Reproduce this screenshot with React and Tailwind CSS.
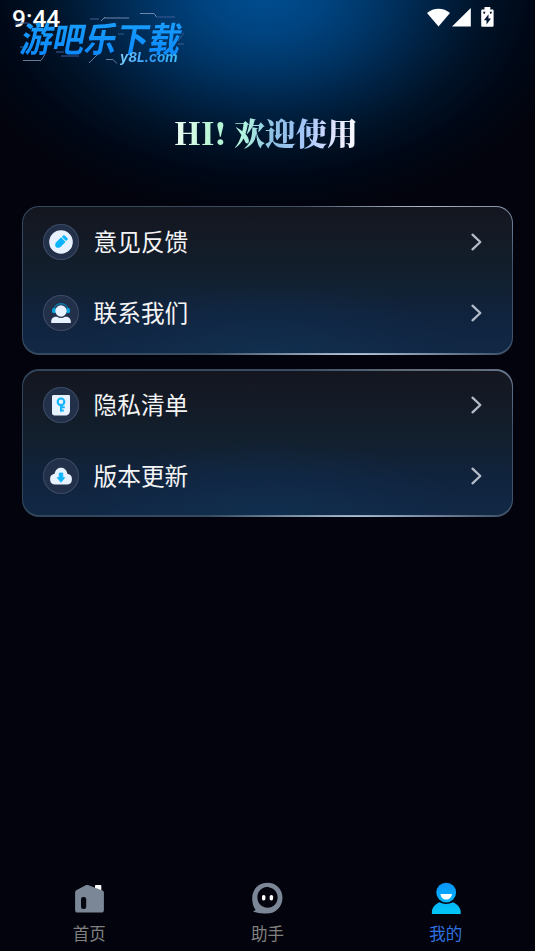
const CARDS = [
  {
    id: 'support',
    edge: 'bg-[radial-gradient(130px_6px_at_82%_0%,#b4bed0,transparent),radial-gradient(150px_6px_at_68%_100%,#c0d0e4,transparent),radial-gradient(60px_60px_at_100%_0%,#7d8da6,transparent),linear-gradient(90deg,#34495f,#3f536b)] pt-px pb-[2px]',
    items: [
      { label: '意见反馈', Icon: PencilIcon },
      { label: '联系我们', Icon: ServiceIcon },
    ],
  },
  {
    id: 'about',
    edge: 'bg-[radial-gradient(130px_6px_at_82%_0%,#68737f,transparent),radial-gradient(150px_6px_at_68%_100%,#b4c6dc,transparent),radial-gradient(60px_60px_at_100%_0%,#6d7c93,transparent),linear-gradient(90deg,#30445a,#3f536b)] pt-[2px] pb-[2px]',
    items: [
      { label: '隐私清单', Icon: KeyIcon },
      { label: '版本更新', Icon: CloudIcon },
    ],
  },
]

const TABS = [
  { label: '首页', Icon: HomeIcon },
  { label: '助手', Icon: AssistantIcon },
  { label: '我的', Icon: MineIcon, active: true },
]

function PencilIcon() {
  return (
    <svg className="block size-9" viewBox="0 0 36 36">
      <circle cx="18" cy="18" r="11.8" fill="#e8f1fe" />
      <g transform="rotate(45 18 18)" fill="#08b5fc">
        <path d="M15.400 15.300h5.200v6.900L19 24.400h-2l-1.600-2.200z" strokeLinejoin="round" stroke="#08b5fc" strokeWidth="1.200" />
        <rect x="14.900" y="10.800" width="6.200" height="3" rx="1.200" />
      </g>
    </svg>
  )
}

function ServiceIcon() {
  return (
    <svg className="block size-9" viewBox="0 0 36 36">
      <path d="M10.800 14.800a7.300 7.300 0 0 1 14.400 0" fill="none" stroke="#0b7fab" strokeWidth="1.400" />
      <rect x="9" y="13" width="4" height="5.200" rx="1.700" fill="#07a4df" />
      <rect x="23" y="13" width="4" height="5.200" rx="1.700" fill="#07a4df" />
      <circle cx="18" cy="16" r="5.700" fill="#e8f1fe" />
      <path d="M8.200 28v-1.500c0-2.800 2.100-4.800 5-4.800h.8c2.500 1.600 5.500 1.600 8 0h.8c2.900 0 5 2 5 4.800V28z" fill="#e8f1fe" />
    </svg>
  )
}

function KeyIcon() {
  return (
    <svg className="block size-9" viewBox="0 0 36 36">
      <path d="M10.500 8h15.200c.8 0 1.300.5 1.300 1.300v14.200c0 3-2 5-4.700 5H11.700A2.700 2.700 0 0 1 9 25.800V9.500C9 8.600 9.600 8 10.500 8z" fill="#e8f1fe" />
      <g fill="none" stroke="#15b6fb" strokeWidth="2.200">
        <circle cx="18" cy="14.800" r="3.300" />
        <path d="M18 18v6.800M18 20.200h3.800M18 23.600h2.800" strokeWidth="2" />
      </g>
    </svg>
  )
}

function CloudIcon() {
  return (
    <svg className="block size-9" viewBox="0 0 36 36">
      <path d="M12.200 26.600a5.500 5.500 0 0 1-.6-10.900c.8-4 3.500-5.900 6.400-5.900s5.600 1.900 6.400 5.900a5.500 5.500 0 0 1-.6 10.900z" fill="#e8f1fe" />
      <path d="M16.200 15h3.600v4.600h2L18 24.300l-3.800-4.700h2z" fill="#10b7ff" stroke="#10b7ff" strokeWidth=".8" strokeLinejoin="round" />
    </svg>
  )
}

function HomeIcon() {
  return (
    <svg className="block h-8 w-9" viewBox="0 0 36 32">
      <rect x="24" y="3" width="6.300" height="8" rx=".8" fill="#fff" />
      <path d="M5.700 8 14.200 3.400c1.200-.6 2.200-.6 3.500-.1l13.700 5.200c1 .4 1.500 1.100 1.500 2.200v17.200c0 1.700-.9 2.600-2.600 2.600H6.700c-1.700 0-2.600-.9-2.600-2.600V10.800c0-1.400.5-2.200 1.600-2.800z" fill="#7b8796" />
      <rect x="10" y="15" width="5.200" height="12" rx="2.200" fill="#050711" />
    </svg>
  )
}

function AssistantIcon() {
  return (
    <svg className="block h-8 w-9" viewBox="0 0 36 32">
      <path fillRule="evenodd" d="M18.500.8c8.600 0 15 6.300 15 14.900 0 9.200-6.800 15.800-15.700 15.800-4 0-9.400-.1-14-2.200 1.500-.2 2.300-.900 2.700-1.600C4.300 24.800 3.200 20.900 3.200 16.200 3.200 7.200 9.800.8 18.500.8zm2.200 4.400c-1.300-.4-2.200-.3-3.700-.1-5 .7-8.600 4.900-8.600 10.200 0 6 4.400 10.400 10.200 10.400s10-4.400 10-10.200c0-4.600-2.700-8.300-6.700-9.700-1.300.3-2.200-.4-2.700-1.900 0 .8.600 1.200 1.500 1.300z" fill="#7b8796" />
      <rect x="13" y="13" width="3.400" height="5.400" rx="1.600" fill="#fff" />
      <rect x="20.700" y="13" width="3.400" height="5.400" rx="1.600" fill="#fff" />
    </svg>
  )
}

function MineIcon() {
  return (
    <svg className="block h-8 w-9" viewBox="0 0 36 32">
      <defs>
        <linearGradient id="mine" x1="0" y1="0" x2="0" y2="32" gradientUnits="userSpaceOnUse">
          <stop offset="0" stopColor="#0c93ff" />
          <stop offset="1" stopColor="#02c8f5" />
        </linearGradient>
      </defs>
      <path d="M3.900 32v-2.300c0-3.800 3.200-7.600 7.700-9.500 4.200 2.300 9 2.300 13.200 0 4.500 1.900 7.900 5.700 7.900 9.500V32z" fill="url(#mine)" />
      <circle cx="18.200" cy="10.600" r="9.900" fill="url(#mine)" />
      <path d="M12.500 12h11.400c-.2 3.500-2.600 5.600-5.700 5.600s-5.500-2.100-5.700-5.600z" fill="#fff" />
    </svg>
  )
}

function StatusIcons() {
  return (
    <svg className="block h-[22px] w-[70px]" viewBox="0 0 70 22" fill="#fff">
      <path d="M11.500 19.500 0 6C6.500.200 16.500.200 23 6z" />
      <path d="M43.800 19.500H25L43.800 1z" />
      <path d="M55.500 2.500h2V0h5.800v2.500h2c.8 0 1.300.5 1.300 1.300v14.600c0 .8-.5 1.300-1.300 1.300h-9.800c-.8 0-1.300-.5-1.300-1.300V3.800c0-.8.500-1.300 1.300-1.300z" />
      <path d="m61.500 7.200-4.600 6h2.600v4.200l4.500-5.800h-2.500z" fill="#041633" />
      <path d="M56 4.800h2.400l-.5 2h-1.200zM62.700 4.800H65l-.7 2h-1.200z" fill="#041633" />
    </svg>
  )
}

function Watermark() {
  return (
    <div className="absolute top-[12px] left-[14px] h-[54px] w-[176px]">
      <svg className="absolute inset-0" width="176" height="54" viewBox="0 0 176 54" fill="none" strokeWidth="1">
        <path d="M90 6h25M126 1.500h14l3 4M87 9l4-4" stroke="#6e87ad" />
        <path d="M76 7h9M144 5h17M1 11h13M164 32h6M42 40h8M47 44h18" stroke="#3f5c97" />
        <path d="M9 48.500h18l4-6M75 51l9-9M92 47.500h7l4 4" stroke="#667b9b" />
        <path d="M164 29l6-8M6 35h8M104 22h6" stroke="#2f5c93" />
      </svg>
      <div className="absolute top-[6px] left-[7.500px] -skew-x-12 scale-y-108 bg-linear-to-b from-[#1ba0fc] to-[#0c88ff] bg-clip-text font-['Noto_Sans_CJK_SC',sans-serif] text-[32px] leading-[38px] font-bold whitespace-nowrap text-transparent">
        游吧乐下载
      </div>
      <div className="absolute top-[36px] left-[106px] bg-linear-to-r from-[#7ad0ff] via-[#2d9cff] to-[#45c4f5] bg-clip-text pr-1 font-[Inter,sans-serif] text-[13.500px] leading-[18px] font-bold whitespace-nowrap text-transparent italic">
        y8L.com
      </div>
    </div>
  )
}

function MenuRow({ label, Icon }) {
  return (
    <div className="flex h-[71.300px] items-center pr-[30px] pl-5">
      <span className="size-9 rounded-full bg-[#23304a] shadow-[inset_0_0_0_1px_#3c4a63]">
        <Icon />
      </span>
      <span className="relative -top-px ml-[14.500px] flex-1 text-[23.700px] leading-8 text-[#f4f4f5]">{label}</span>
      <svg className="block h-[18px] w-3" viewBox="0 0 12 18" fill="none" stroke="#b4bcc9" strokeWidth="2.300" strokeLinecap="round" strokeLinejoin="round">
        <path d="M2.500 1.700 10.300 9l-7.800 7.300" />
      </svg>
    </div>
  )
}

export default function App() {
  return (
    <div className="relative flex h-[951px] w-[535px] flex-col overflow-hidden bg-[#02030c] bg-[radial-gradient(ellipse_325px_225px_at_265px_-8px,#004d90_0%,#004481_18%,#003464_36%,#002244_52%,#001328_67%,#000817_82%,#02030c_100%)] font-['Noto_Sans_CJK_SC',sans-serif]">
      <header className="flex h-[38px] items-start justify-between pt-[7px] pr-[38px] pl-3">
        <span className="font-[Roboto,sans-serif] text-[24.500px] leading-6 font-medium text-white">9:44</span>
        <StatusIcons />
      </header>
      <Watermark />

      <h1 className="mt-[70px] ml-[174px] flex w-[184px] items-baseline justify-between bg-[linear-gradient(95deg,#f0fff4_0%,#b5f5d3_22%,#b2f5df_38%,#8cc0e4_54%,#a7c6fa_72%,#e6e6ff_88%,#fff_100%)] bg-clip-text font-['Noto_Serif_CJK_SC','Noto_Sans_CJK_SC',serif] text-[31px] leading-12 font-black text-transparent">
        <span>HI!</span>
        <span>欢迎使用</span>
      </h1>

      <main className="mt-[50px] flex flex-col gap-[14px] px-[22px]">
        {CARDS.map((card) => (
          <section key={card.id} className={`h-[148.500px] rounded-[17px] px-px ${card.edge}`}>
            <div className="h-full rounded-2xl bg-[radial-gradient(ellipse_190px_75px_at_50%_100%,#10345780,transparent),linear-gradient(180deg,#14161f_0%,#12202f_50%,#10233e_75%,#112845_100%)]">
              <div className="-translate-y-px">
                {card.items.map((item) => (
                  <MenuRow key={item.label} {...item} />
                ))}
              </div>
            </div>
          </section>
        ))}
      </main>

      <nav className="mt-auto grid h-[69px] grid-cols-3">
        {TABS.map(({ label, Icon, active }) => (
          <div key={label} className="flex flex-col items-center">
            <Icon />
            <span className={`mt-[7px] text-[16.500px] leading-6 ${active ? 'text-[#2f72e0]' : 'text-[#80817f]'}`}>{label}</span>
          </div>
        ))}
      </nav>
    </div>
  )
}
